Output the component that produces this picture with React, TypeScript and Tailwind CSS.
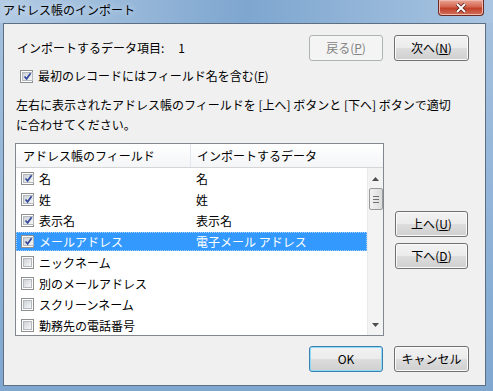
import React from "react";

type Field = { name: string; data: string; checked: boolean; selected?: boolean };

const fields: Field[] = [
  { name: "名", data: "名", checked: true },
  { name: "姓", data: "姓", checked: true },
  { name: "表示名", data: "表示名", checked: true },
  { name: "メールアドレス", data: "電子メール アドレス", checked: true, selected: true },
  { name: "ニックネーム", data: "", checked: false },
  { name: "別のメールアドレス", data: "", checked: false },
  { name: "スクリーンネーム", data: "", checked: false },
  { name: "勤務先の電話番号", data: "", checked: false },
];

const Check = ({ checked }: { checked: boolean }) => (
  <span className="w-[13px] h-[13px] shrink-0 border border-[#8e8f8f] bg-white p-[1px] flex">
    <span className="flex-1 border border-[#b4b9bf] bg-linear-to-br from-[#cdd1d6] to-[#f8f8f8] flex items-center justify-center">
      {checked && (
        <svg width="9" height="9" viewBox="0 0 9 9" className="overflow-visible">
          <path d="M1.5 4.5 L3.6 6.8 L7.6 1.2" fill="none" stroke="#34499a" strokeWidth="1.7" />
        </svg>
      )}
    </span>
  </span>
);

type BtnProps = { children: React.ReactNode; className: string; disabled?: boolean; def?: boolean };

const Btn = ({ children, className, disabled, def }: BtnProps) => {
  if (disabled) {
    return (
      <div className={`${className} h-[26px] rounded-[3px] border border-[#adb2b5] bg-[#f4f4f4] text-[#838383] flex items-center justify-center`}>
        {children}
      </div>
    );
  }
  return (
    <div
      className={`${className} h-[26px] rounded-[3px] border ${
        def ? "border-[#3c7fb1] shadow-[inset_0_0_0_1px_#8fdcf6]" : "border-[#707070] shadow-[inset_0_0_0_1px_#fbfbfb]"
      } bg-[linear-gradient(#f2f2f2,#ebebeb_50%,#dddddd_50%,#cfcfcf)] flex items-center justify-center`}
    >
      {children}
    </div>
  );
};

export default function App() {
  return (
    <div className="w-[493px] h-[391px] flex flex-col overflow-hidden bg-linear-to-b from-[#a6c1de] via-[#93b5d9] to-[#7fa7d0] font-['Noto_Sans_CJK_JP',sans-serif] text-[12px] leading-[20px] text-black">
      {/* title bar */}
      <div className="h-[23px] shrink-0 flex items-start bg-linear-to-r from-[#b3cbe4] via-[#7ea6cf] to-[#a9c5e2]">
        <span className="pl-[3px] leading-[20px] [text-shadow:0_0_6px_#e8f1fa]">アドレス帳のインポート</span>
        <div className="ml-auto mr-[9px] w-[46px] h-[16px] rounded-b-[4px] border border-t-0 border-[#6b2a22] bg-[linear-gradient(#e9a597,#d4664f_45%,#c1402a_55%,#d2705a)] flex items-center justify-center shadow-[inset_0_0_0_1px_#f0b9ad]">
          <svg width="12" height="10" viewBox="0 0 12 10">
            <path d="M2 1 L10 9 M10 1 L2 9" stroke="#5a1f18" strokeWidth="3.6" />
            <path d="M2 1 L10 9 M10 1 L2 9" stroke="#ffffff" strokeWidth="2" />
          </svg>
        </div>
      </div>

      {/* client area */}
      <div className="flex-1 ml-[3px] mr-[7px] mb-[5px] border border-[#5d6f82] bg-[#f0f0f0] flex flex-col">
        <div className="pt-[11px] pl-[13px] pr-[16px] flex items-center">
          <span>
            インポートするデータ項目:<span className="ml-[14px]">1</span>
          </span>
          <div className="ml-auto flex gap-[11px]">
            <Btn className="w-[74px]" disabled>
              戻る(<span className="underline">P</span>)
            </Btn>
            <Btn className="w-[75px]">
              次へ(<span className="underline">N</span>)
            </Btn>
          </div>
        </div>

        <div className="mt-[5px] h-[20px] pl-[16px] flex items-center gap-[5px]">
          <Check checked />
          <span>
            最初のレコードにはフィールド名を含む(<span className="underline">F</span>)
          </span>
        </div>

        <p className="mt-[9px] pl-[12px] whitespace-nowrap">
          左右に表示されたアドレス帳のフィールドを [上へ] ボタンと [下へ] ボタンで適切
          <br />
          に合わせてください。
        </p>

        <div className="mt-[8px] pl-[11px] flex">
          <div className="w-[369px] h-[193px] border border-[#828790] bg-white flex flex-col overflow-hidden">
            <div className="h-[24px] shrink-0 flex border-b border-[#d5d5d5] bg-linear-to-b from-white to-[#f4f5f7]">
              <div className="w-[175px] border-r border-[#e3e8ee] pl-[7px] flex items-center">アドレス帳のフィールド</div>
              <div className="pl-[6px] flex items-center">インポートするデータ</div>
            </div>
            <div className="flex flex-1 min-h-0">
              <div className="flex-1 overflow-hidden">
                {fields.map((f) => (
                  <div key={f.name} className="h-[21px] py-[1px]">
                    <div
                      className={`h-full flex items-center ${
                        f.selected ? "bg-[#3399ff] text-white outline outline-1 outline-dotted outline-[#a7d0fa] -outline-offset-1" : ""
                      }`}
                    >
                      <div className="w-[175px] pl-[5px] flex items-center gap-[5px]">
                        <Check checked={f.checked} />
                        <span>{f.name}</span>
                      </div>
                      <div className="pl-[5px]">{f.data}</div>
                    </div>
                  </div>
                ))}
              </div>
              <div className="w-[16px] shrink-0 bg-[#f3f3f3] border-l border-[#e9e9e9] flex flex-col items-center">
                <div className="h-[17px] w-full flex items-center justify-center pt-[4px]">
                  <svg width="7" height="4" viewBox="0 0 7 4">
                    <path d="M0 4 L3.5 0 L7 4 Z" fill="#4d4d4d" />
                  </svg>
                </div>
                <div className="mt-[3px] w-[14px] h-[22px] rounded-[2px] border border-[#9a9a9a] bg-linear-to-r from-[#f2f2f2] to-[#dcdcdc] flex flex-col items-center justify-center gap-[2px]">
                  <span className="w-[6px] h-[1px] bg-[#6f6f6f]" />
                  <span className="w-[6px] h-[1px] bg-[#6f6f6f]" />
                  <span className="w-[6px] h-[1px] bg-[#6f6f6f]" />
                </div>
                <div className="mt-auto h-[17px] w-full flex items-center justify-center pb-[3px]">
                  <svg width="7" height="4" viewBox="0 0 7 4">
                    <path d="M0 0 L3.5 4 L7 0 Z" fill="#4d4d4d" />
                  </svg>
                </div>
              </div>
            </div>
          </div>

          <div className="ml-[11px] pt-[68px] flex flex-col gap-[6px]">
            <Btn className="w-[73px]">
              上へ(<span className="underline">U</span>)
            </Btn>
            <Btn className="w-[73px]">
              下へ(<span className="underline">D</span>)
            </Btn>
          </div>
        </div>

        <div className="mt-[10px] pr-[16px] flex justify-end gap-[11px]">
          <Btn className="w-[74px]" def>
            OK
          </Btn>
          <Btn className="w-[75px]">キャンセル</Btn>
        </div>
      </div>
    </div>
  );
}
